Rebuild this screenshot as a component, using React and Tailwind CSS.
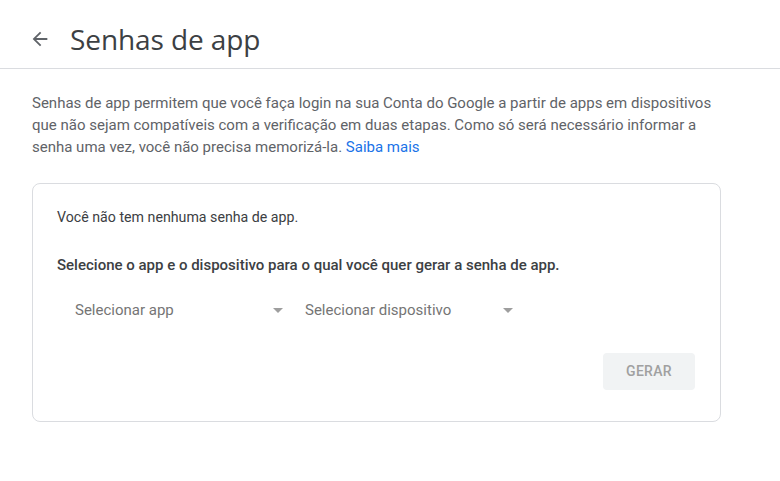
import { useState } from 'react';

function Select({ label, className }) {
    return (
        <div className={`flex items-center justify-between h-[36px] ${className}`}>
            <span className="text-[#757575] text-[15px]">{label}</span>
            <svg width="10" height="5" viewBox="0 0 10 5" className="text-[#9e9e9e]">
                <path d="M0 0 L5 5 L10 0 Z" fill="currentColor" />
            </svg>
        </div>
    );
}

export default function App() {
    const [app] = useState('Selecionar app');
    const [device] = useState('Selecionar dispositivo');

    return (
        <div className="w-[780px] h-[481px] bg-white font-['Roboto',sans-serif] text-[#202124]">
            {/* Header */}
            <header className="flex items-center h-[69px] pl-[29px] pt-[10px] border-b border-[#dadce0]">
                <svg width="22" height="22" viewBox="0 0 24 24" className="text-[#5f6368]">
                    <path d="M20 11H7.83l5.59-5.59L12 4l-8 8 8 8 1.41-1.41L7.83 13H20v-2z" fill="currentColor" />
                </svg>
                <h1 className="ml-[19px] text-[28px] font-['Open_Sans',sans-serif] text-[#3c4043] tracking-[-0.1px] leading-none">Senhas de app</h1>
            </header>

            <main className="px-[32px] pt-[23px]">
                <p className="text-[15px] leading-[22px] text-[#5f6368] whitespace-nowrap">
                    Senhas de app permitem que você faça login na sua Conta do Google a partir de apps em dispositivos<br />
                    que não sejam compatíveis com a verificação em duas etapas. Como só será necessário informar a<br />
                    senha uma vez, você não precisa memorizá-la. <a className="text-[#1a73e8]">Saiba mais</a>
                </p>

                <section className="mt-[25px] w-[689px] h-[239px] border border-[#dadce0] rounded-[8px] pl-[24px] pr-[25px] pt-[23px]">
                    <p className="text-[14.2px] text-[#3c4043] leading-[20px]">Você não tem nenhuma senha de app.</p>
                    <p className="mt-[28px] text-[15px] font-medium text-[#3c4043] leading-[20px]">
                        Selecione o app e o dispositivo para o qual você quer gerar a senha de app.
                    </p>
                    <div className="mt-[17px] flex">
                        <Select label={app} className="w-[234px] pl-[18px] pr-[8px]" />
                        <Select label={device} className="w-[230px] pl-[14px] pr-[8px]" />
                    </div>
                    <div className="mt-[25px] flex justify-end">
                        <button className="w-[92px] h-[37px] bg-[#f1f3f4] rounded-[4px] text-[14px] font-medium tracking-[0.3px] text-[#a0a0a0]">
                            GERAR
                        </button>
                    </div>
                </section>
            </main>
        </div>
    );
}
